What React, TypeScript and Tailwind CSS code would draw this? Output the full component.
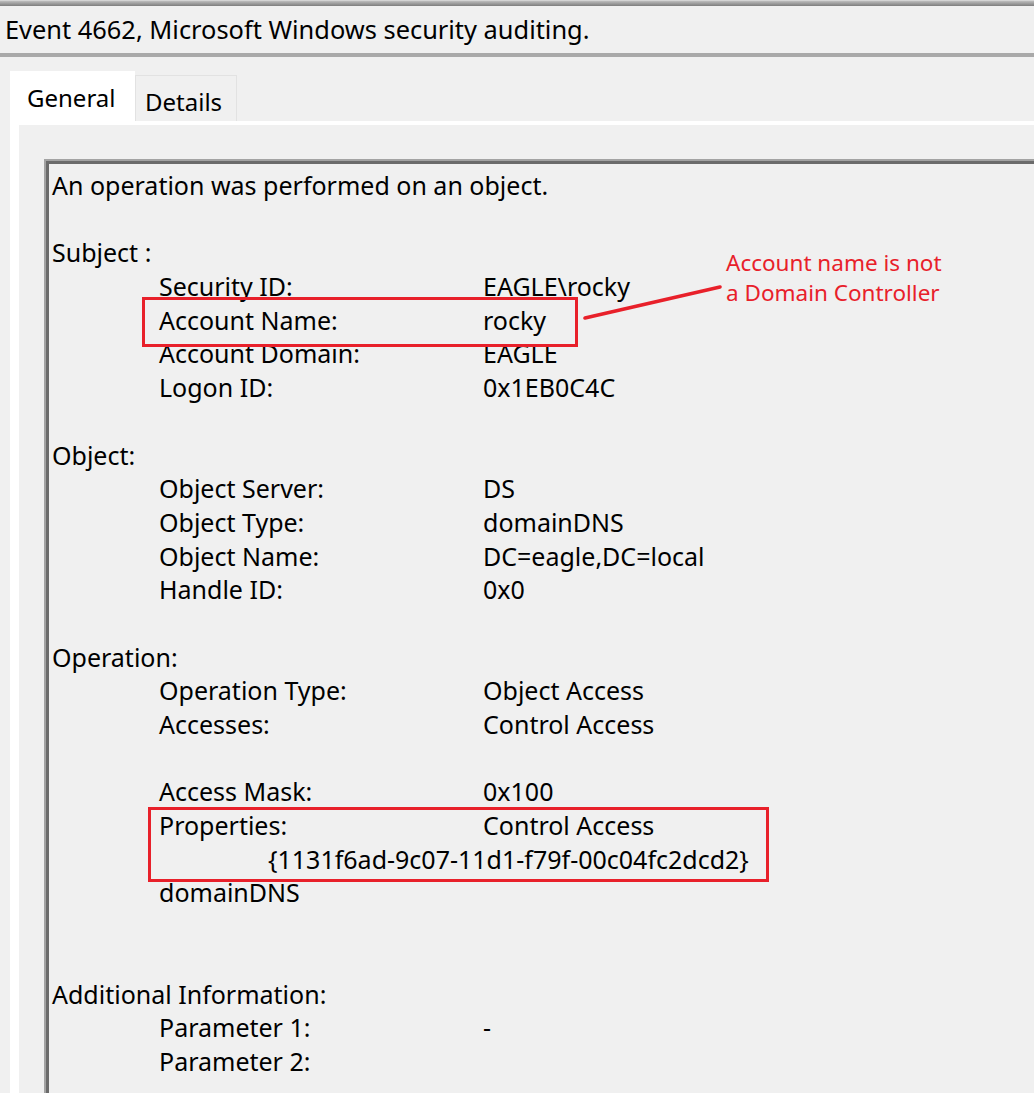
import React from 'react'

type Row =
  | { kind: 'text'; text: string; indent?: number }
  | { kind: 'pair'; label: string; value: string }
  | { kind: 'blank' }

const rows: Row[] = [
  { kind: 'text', text: 'An operation was performed on an object.' },
  { kind: 'blank' },
  { kind: 'text', text: 'Subject :' },
  { kind: 'pair', label: 'Security ID:', value: 'EAGLE\\rocky' },
  { kind: 'pair', label: 'Account Name:', value: 'rocky' },
  { kind: 'pair', label: 'Account Domain:', value: 'EAGLE' },
  { kind: 'pair', label: 'Logon ID:', value: '0x1EB0C4C' },
  { kind: 'blank' },
  { kind: 'text', text: 'Object:' },
  { kind: 'pair', label: 'Object Server:', value: 'DS' },
  { kind: 'pair', label: 'Object Type:', value: 'domainDNS' },
  { kind: 'pair', label: 'Object Name:', value: 'DC=eagle,DC=local' },
  { kind: 'pair', label: 'Handle ID:', value: '0x0' },
  { kind: 'blank' },
  { kind: 'text', text: 'Operation:' },
  { kind: 'pair', label: 'Operation Type:', value: 'Object Access' },
  { kind: 'pair', label: 'Accesses:', value: 'Control Access' },
  { kind: 'blank' },
  { kind: 'pair', label: 'Access Mask:', value: '0x100' },
  { kind: 'pair', label: 'Properties:', value: 'Control Access' },
  { kind: 'text', text: '{1131f6ad-9c07-11d1-f79f-00c04fc2dcd2}', indent: 216 },
  { kind: 'text', text: 'domainDNS', indent: 107 },
  { kind: 'blank' },
  { kind: 'blank' },
  { kind: 'text', text: 'Additional Information:' },
  { kind: 'pair', label: 'Parameter 1:', value: '-' },
  { kind: 'pair', label: 'Parameter 2:', value: '' },
]

function EventLine({ row }: { row: Row }) {
  if (row.kind === 'blank') return <div className="h-[33.7px]" />
  if (row.kind === 'text')
    return (
      <div className="h-[33.7px] whitespace-pre" style={row.indent ? { paddingLeft: row.indent } : undefined}>
        {row.text}
      </div>
    )
  return (
    <div className="flex h-[33.7px] whitespace-pre pl-[107px]">
      <span className="w-[324px] shrink-0">{row.label}</span>
      <span>{row.value}</span>
    </div>
  )
}

export default function App() {
  return (
    <div className="relative h-[1093px] w-[1034px] overflow-hidden bg-[#f0f0f0] font-['Noto_Sans',sans-serif] text-[25px] text-black">
      <div className="h-[6px] border-t border-[#d4d4d4] bg-linear-to-b from-[#bdbdbd] to-[#7e7e7e]" />
      <div className="h-[47px] whitespace-nowrap pl-[5px] text-[25.4px] leading-[47px]">
        Event 4662, Microsoft Windows security auditing.
      </div>
      <div className="h-[4px] bg-[#a9a9a9]" />

      <div className="mt-[14px] flex items-end pl-[10px] text-[24px]">
        <div className="h-[50px] w-[125px] bg-white pl-[17px] leading-[54px]">General</div>
        <div className="h-[46px] w-[102px] border border-b-0 border-[#e2e2e2] bg-[#f0f0f0] pl-[9px] leading-[52px]">
          Details
        </div>
      </div>

      <div className="ml-[10px] h-[1000px] border-l-[9px] border-t-[4px] border-white pl-[25px] pt-[34px]">
        <div className="h-[1000px] w-[1100px] border-l-2 border-t-2 border-[#a3a3a3] pl-[6px] pt-[8px] leading-[33.7px] shadow-[inset_3px_3px_0_0_#6b6b6b]">
          {rows.map((row, i) => (
            <EventLine key={i} row={row} />
          ))}
        </div>
      </div>

      {/* annotations */}
      <div className="absolute left-[142px] top-[297px] h-[50px] w-[436px] border-[3px] border-[#e8202a]" />
      <div className="absolute left-[148px] top-[807px] h-[75px] w-[621px] border-[3px] border-[#e8202a]" />
      <svg className="absolute left-0 top-0" width="1034" height="1093">
        <line x1="585" y1="318" x2="720" y2="287" stroke="#e8202a" strokeWidth="3.5" strokeLinecap="round" />
      </svg>
      <div className="absolute left-[726px] top-[248px] text-[22.5px] leading-[30px] text-[#e8202a]">
        <div>Account name is not</div>
        <div>a Domain Controller</div>
      </div>
    </div>
  )
}
